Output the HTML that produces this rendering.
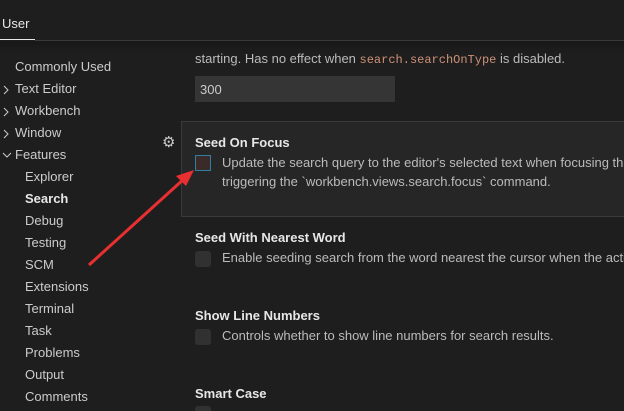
<!DOCTYPE html><html style="height:411px;overflow:hidden"><head><style>
body{margin:0;width:624px;height:411px;background:#1e1e1e;overflow:hidden;position:relative;font-family:"Liberation Sans",sans-serif;font-size:13px;color:#ccc}
.a{position:absolute;white-space:nowrap}
.n{left:15px}.m{left:25px}
.t{font-weight:bold;color:#e7e7e7}
.cb{position:absolute;width:16px;height:16px;background:#313131;border-radius:3px;left:195px}
.ch{position:absolute;left:2px}
</style></head><body>
<div class="a" style="left:2px;top:16px;color:#e7e7e7">User</div>
<div class="a" style="left:0;top:39px;width:35px;height:1px;background:#e7e7e7"></div>
<div class="a" style="left:35px;top:40px;width:589px;height:1px;background:#3a3a3a"></div>
<div class="a" style="left:0;top:41px;width:624px;height:12px;background:linear-gradient(#171717,#1e1e1e)"></div>
<div class="a" style="left:195px;top:51px;color:#bbb">starting. Has no effect when <span style="font-family:'Liberation Mono',monospace;font-size:12px;color:#ce9178">search.searchOnType</span> is disabled.</div>
<div class="a" style="left:195px;top:76px;width:200px;height:26px;background:#353535"></div>
<div class="a" style="left:200px;top:82px;color:#ccc">300</div>
<div class="a n" style="top:59px">Commonly Used</div>
<svg class="ch" style="top:84px" width="8" height="12"><path d="M2 2l4 4-4 4" stroke="#ccc" fill="none"/></svg><div class="a n" style="top:81px">Text Editor</div>
<svg class="ch" style="top:106px" width="8" height="12"><path d="M2 2l4 4-4 4" stroke="#ccc" fill="none"/></svg><div class="a n" style="top:103px">Workbench</div>
<svg class="ch" style="top:128px" width="8" height="12"><path d="M2 2l4 4-4 4" stroke="#ccc" fill="none"/></svg><div class="a n" style="top:125px">Window</div>
<svg class="ch" style="top:150px;left:1px" width="12" height="10"><path d="M2 3l4 4 4-4" stroke="#ccc" fill="none"/></svg><div class="a n" style="top:147px">Features</div>
<div class="a m" style="top:169px">Explorer</div>
<div class="a m" style="top:191px;font-weight:bold;color:#e7e7e7">Search</div>
<div class="a m" style="top:213px">Debug</div>
<div class="a m" style="top:235px">Testing</div>
<div class="a m" style="top:257px">SCM</div>
<div class="a m" style="top:279px">Extensions</div>
<div class="a m" style="top:301px">Terminal</div>
<div class="a m" style="top:323px">Task</div>
<div class="a m" style="top:345px">Problems</div>
<div class="a m" style="top:367px">Output</div>
<div class="a m" style="top:389px">Comments</div>
<div class="a" style="left:181px;top:121px;width:450px;height:94px;background:#262626;border:1px solid #3a3a3a"></div>
<div class="a" style="left:162px;top:133px;font-size:15px;color:#ccc">&#x2699;</div>
<div class="a t" style="left:195px;top:135px">Seed On Focus</div>
<div class="a" style="left:195px;top:155px;width:16px;height:16px;background:#3a2a2a;border:1px solid #2f7fa0;box-sizing:border-box"></div>
<div class="a" style="left:222px;top:155px;color:#bbb">Update the search query to the editor's selected text when focusing the</div>
<div class="a" style="left:222px;top:174px;color:#bbb">triggering the `workbench.views.search.focus` command.</div>
<div class="a t" style="left:195px;top:230px">Seed With Nearest Word</div>
<div class="cb" style="top:251px"></div>
<div class="a" style="left:222px;top:250px;color:#bbb">Enable seeding search from the word nearest the cursor when the activ</div>
<div class="a t" style="left:195px;top:308px">Show Line Numbers</div>
<div class="cb" style="top:329px"></div>
<div class="a" style="left:222px;top:328px;color:#bbb">Controls whether to show line numbers for search results.</div>
<div class="a t" style="left:195px;top:386px">Smart Case</div>
<div class="cb" style="top:406px;height:5px;border-radius:3px 3px 0 0"></div>
<svg class="a" style="left:0;top:0" width="624" height="411"><line x1="89" y1="265" x2="185" y2="178" stroke="#e83030" stroke-width="3"/><polygon points="194,170 176,176 186,186" fill="#e83030"/></svg>
</body></html>
